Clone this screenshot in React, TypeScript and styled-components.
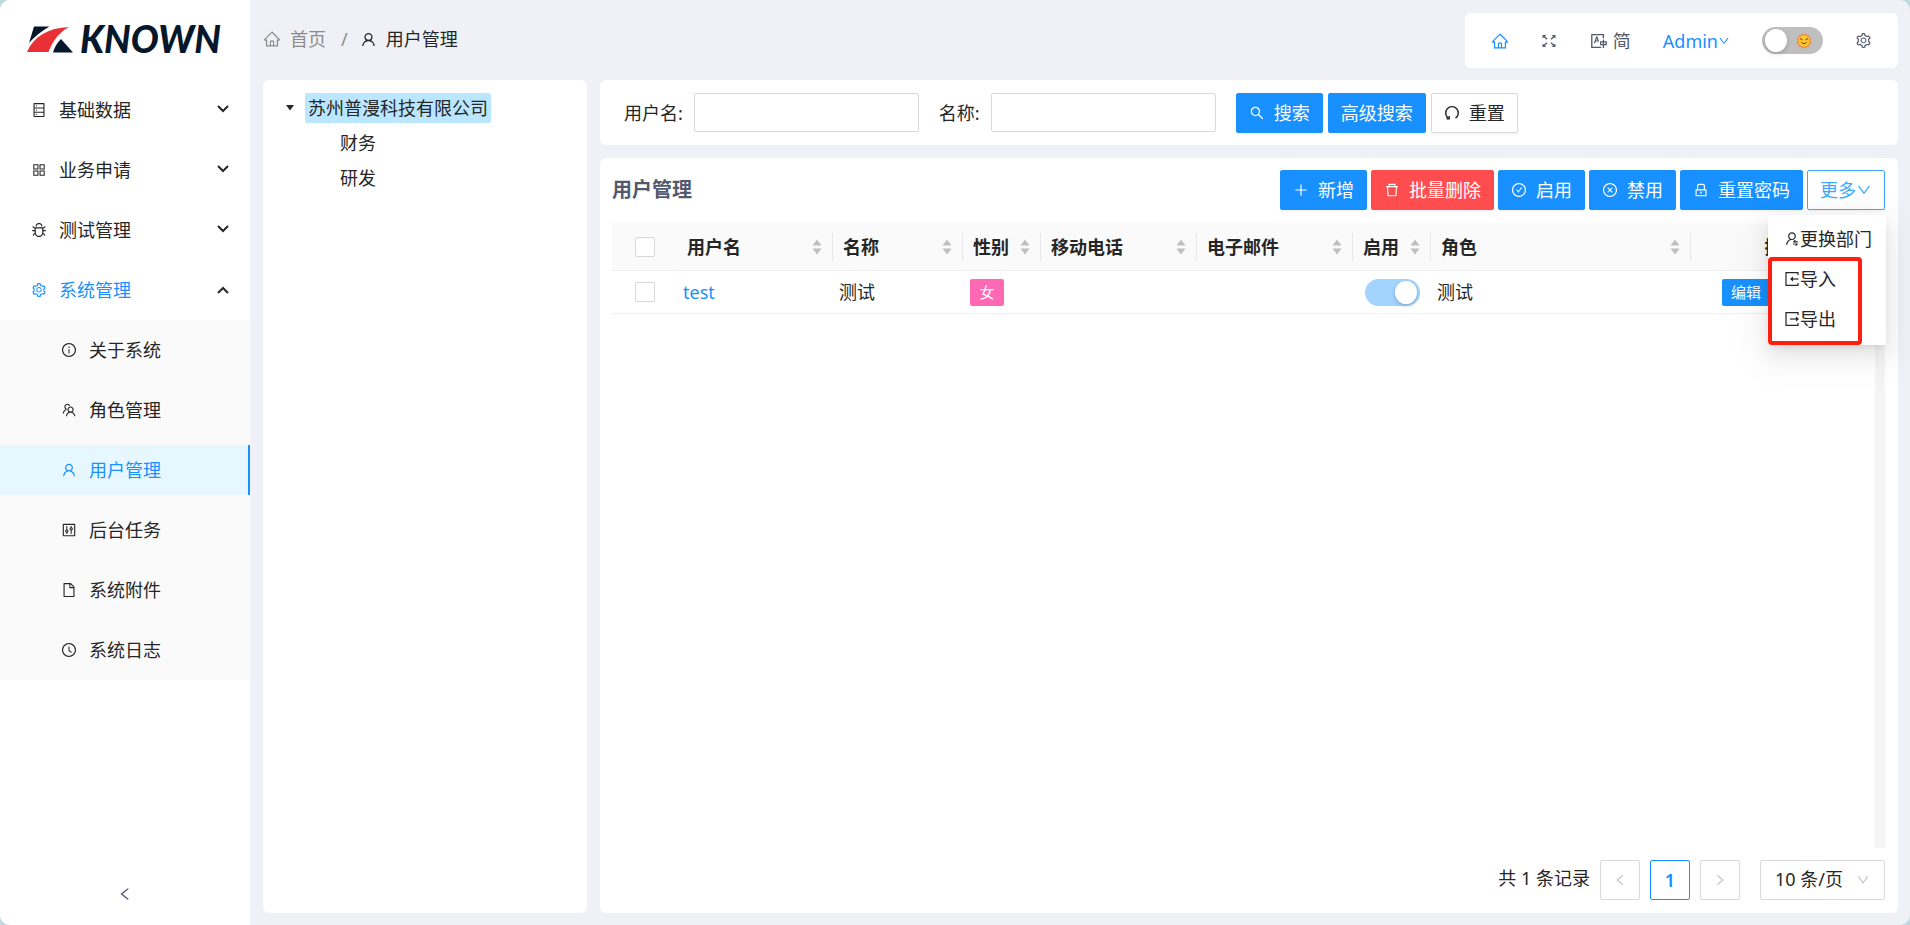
import React from "react";
import styled, { createGlobalStyle, css } from "styled-components";
import {
  AiOutlineHome, AiOutlineUser, AiOutlineDatabase, AiOutlineAppstore, AiOutlineBug, AiOutlineSetting,
  AiOutlineInfoCircle, AiOutlineTeam, AiOutlineControl, AiOutlineFile, AiOutlineClockCircle,
  AiOutlineTranslation, AiOutlineSearch, AiOutlinePlus, AiOutlineDelete, AiOutlineCheckCircle,
  AiOutlineCloseCircle, AiOutlineLock, AiOutlineDown, AiOutlineLeft, AiOutlineRight,
  AiOutlineUserSwitch,
} from "react-icons/ai";

const BLUE = "#1890ff";
const TEXT = "#262626";
const SLATE = "#515a6e";
const LINE = "#d9d9d9";

const Global = createGlobalStyle`
  *, *::before, *::after { box-sizing: border-box; }
  html, body { margin: 0; height: 100%; }
  #root { height: 100%; }
  body {
    background: #bfdadf;
    color: ${TEXT};
    font: 400 18px/28px "Noto Sans", "Noto Sans CJK SC", sans-serif;
  }
  button, input, select { font: inherit; color: inherit; margin: 0; }
  a { color: inherit; text-decoration: none; }
  ul { list-style: none; margin: 0; padding: 0; }
  svg { flex: none; }
`;

const Shell = styled.div`
  display: flex;
  min-height: 100%;
  border-radius: 10px;
  overflow: hidden;
  background: #eff1f6;
`;

/* ---------- sidebar ---------- */

const Sidebar = styled.aside`
  width: 250px;
  flex: none;
  display: flex;
  flex-direction: column;
  background: #fff;
`;

const LogoLink = styled.a`
  display: block;
  height: 80px;
  padding: 14px 0 0 26px;
`;

const Menu = styled.ul`
  flex: 1;
  padding-top: 5px;
`;

const MenuLink = styled.a<{ $sub?: boolean; $active?: boolean; $open?: boolean }>`
  display: flex;
  align-items: center;
  height: 50px;
  margin-bottom: 10px;
  gap: 12px;
  padding: 0 20px 0 ${(p) => (p.$sub ? 61 : 31)}px;
  color: ${(p) => (p.$active || p.$open ? BLUE : TEXT)};
  ${(p) => p.$active && css`
    background: #e6f7ff;
    border-right: 2px solid ${BLUE};
  `}
  svg:last-child:not(:first-child) { margin-left: auto; color: ${TEXT}; }
`;

const SubMenu = styled.ul`
  background: #fafafa;
  padding: 5px 0;
  margin-top: -5px;
  li:last-child a { margin-bottom: 0; }
`;

const Collapse = styled.button`
  height: 60px;
  border: 0;
  background: none;
  color: ${SLATE};
`;

/* ---------- header ---------- */

const Main = styled.div`
  flex: 1;
  min-width: 0;
  display: flex;
  flex-direction: column;
  padding: 13px 12px 12px 13px;
`;

const Header = styled.header`
  display: flex;
  justify-content: space-between;
  align-items: flex-start;
  height: 67px;
`;

const Crumbs = styled.nav`
  display: flex;
  align-items: center;
  gap: 11px;
  height: 52px;
`;

const Crumb = styled.a<{ $muted?: boolean }>`
  display: flex;
  align-items: center;
  gap: 9px;
  color: ${(p) => (p.$muted ? "#8c8c8c" : TEXT)};
`;

const Slash = styled.span`
  color: #8c8c8c;
  padding: 0 1px 0 4px;
`;

const Tools = styled.div`
  display: flex;
  align-items: center;
  height: 55px;
  padding: 0 26px;
  gap: 32px;
  border-radius: 6px;
  background: #fff;
  color: ${SLATE};
`;

const ToolButton = styled.button<{ $blue?: boolean; $gap?: number }>`
  display: flex;
  align-items: center;
  gap: ${(p) => p.$gap ?? 0}px;
  border: 0;
  padding: 0;
  background: none;
  color: ${(p) => (p.$blue ? BLUE : SLATE)};
`;

const Switch = styled.label<{ $width: number; $on?: boolean }>`
  position: relative;
  display: block;
  width: ${(p) => p.$width}px;
  height: 27px;
  border-radius: 14px;
  background: ${(p) => (p.$on ? "#a3d3ff" : "#bfbfbf")};
  input {
    position: absolute;
    inset: 0;
    margin: 0;
    opacity: 0;
  }
  &::after {
    content: "";
    position: absolute;
    top: 2px;
    ${(p) => (p.$on ? "right: 3px;" : "left: 3px;")}
    width: 22px;
    height: 23px;
    border-radius: 50%;
    background: #fff;
    box-shadow: 0 2px 4px rgba(0, 35, 11, 0.2);
  }
  svg { position: absolute; right: 11px; top: 6px; }
`;

const SwitchCell = styled.div`
  display: flex;
  justify-content: center;
`;

/* ---------- content ---------- */

const Content = styled.main`
  flex: 1;
  display: flex;
  gap: 13px;
`;

const Panel = styled.section`
  background: #fff;
  border-radius: 6px;
`;

const TreePanel = styled(Panel)`
  width: 324px;
  flex: none;
  padding: 10px 20px;
`;

const TreeRow = styled.div<{ $child?: boolean }>`
  display: flex;
  align-items: center;
  gap: 10px;
  height: 35px;
  padding-left: ${(p) => (p.$child ? 54 : 2)}px;
`;

const TreeLabel = styled.span<{ $selected?: boolean }>`
  padding: 1px 3px;
  border-radius: 2px;
  background: ${(p) => (p.$selected ? "#bae7ff" : "transparent")};
`;

const Right = styled.div`
  flex: 1;
  min-width: 0;
  display: flex;
  flex-direction: column;
  gap: 13px;
`;

const SearchPanel = styled(Panel)`
  display: flex;
  align-items: center;
  gap: 5px;
  height: 65px;
  padding: 0 24px;
`;

const Field = styled.label`
  display: flex;
  align-items: center;
  gap: 11px;
  margin-right: 15px;
  input {
    width: 225px;
    height: 39px;
    padding: 0 12px;
    border: 1px solid ${LINE};
    border-radius: 2px;
    outline: 0;
  }
`;

const Button = styled.button<{ $tone?: "blue" | "red" | "ghost" | "plain"; $snug?: boolean }>`
  display: flex;
  align-items: center;
  justify-content: center;
  gap: ${(p) => (p.$snug ? 0 : 9)}px;
  height: 40px;
  padding: 0 12px;
  border: 1px solid;
  border-radius: 2px;
  white-space: nowrap;
  box-shadow: 0 2px 0 rgba(0, 0, 0, 0.03);
  ${(p) => ({
    blue: css`background: ${BLUE}; border-color: ${BLUE}; color: #fff;`,
    red: css`background: #ff4d4f; border-color: #ff4d4f; color: #fff;`,
    ghost: css`background: #fff; border-color: #40a9ff; color: #40a9ff;`,
    plain: css`background: #fff; border-color: ${LINE}; color: ${TEXT};`,
  })[p.$tone ?? "blue"]}
`;

const TablePanel = styled(Panel)`
  flex: 1;
  display: flex;
  flex-direction: column;
  padding: 12px 13px 13px 12px;
`;

const Toolbar = styled.div`
  display: flex;
  align-items: center;
  gap: 4px;
  height: 40px;
  margin-bottom: 13px;
`;

const Title = styled.h1`
  margin: 0 auto 0 0;
  font-size: 20px;
  font-weight: 700;
  color: ${SLATE};
`;

const MoreWrap = styled.div`
  position: relative;
`;

const Dropdown = styled.ul`
  position: absolute;
  z-index: 2;
  top: 45px;
  right: -1px;
  width: 118px;
  padding: 4px 0 6px;
  background: #fff;
  border-radius: 2px;
  box-shadow: 0 4px 8px -4px rgba(0, 0, 0, 0.12), 0 8px 20px rgba(0, 0, 0, 0.08), 0 10px 36px 10px rgba(0, 0, 0, 0.05);
  &::after {
    content: "";
    position: absolute;
    left: 0;
    top: 42px;
    width: 94px;
    height: 88px;
    border: 4px solid #ff1f10;
    border-radius: 4px;
    pointer-events: none;
  }
`;

const DropItem = styled.button`
  display: flex;
  align-items: center;
  width: 100%;
  height: 40px;
  padding: 0 16px;
  border: 0;
  background: none;
  white-space: nowrap;
`;

const TableArea = styled.div`
  flex: 1;
  display: flex;
  align-items: stretch;
`;

const Table = styled.table`
  flex: 1;
  align-self: flex-start;
  table-layout: fixed;
  width: 100%;
  border-collapse: separate;
  border-spacing: 0;
`;

const Th = styled.th`
  height: 48px;
  padding: 0;
  background: #fafafa;
  border-bottom: 1px solid #f0f0f0;
  text-align: left;
  font-weight: 700;
`;

const HeadLabel = styled.div<{ $plain?: boolean }>`
  display: flex;
  align-items: center;
  justify-content: ${(p) => (p.$plain ? "center" : "space-between")};
  height: 28px;
  padding: 0 10px;
  white-space: nowrap;
  border-right: 1px solid ${(p) => (p.$plain ? "transparent" : "#e8e8e8")};
`;

const Td = styled.td`
  height: 43px;
  padding: 0 6px;
  border-bottom: 1px solid #f0f0f0;
  white-space: nowrap;
`;

const Check = styled.input`
  appearance: none;
  display: block;
  width: 20px;
  height: 20px;
  border: 1px solid ${LINE};
  border-radius: 2px;
  background: #fff;
`;

const CheckBox = styled.div`
  display: flex;
  justify-content: center;
`;

const Tag = styled.span`
  display: block;
  width: 34px;
  height: 27px;
  margin-left: 1px;
  border-radius: 2px;
  background: #ff69b4;
  color: #fff;
  font-size: 15px;
  line-height: 27px;
  text-align: center;
`;

const NameLink = styled.a`
  color: ${BLUE};
`;

const EditButton = styled.button`
  display: block;
  height: 27px;
  margin-left: 25px;
  padding: 0 9px;
  border: 0;
  border-radius: 2px;
  background: ${BLUE};
  color: #fff;
  font-size: 15px;
  line-height: 27px;
`;

const ScrollColumn = styled.div`
  width: 10px;
  flex: none;
  display: flex;
  flex-direction: column;
  &::before {
    content: "";
    height: 48px;
    background: #fafafa;
    border-bottom: 1px solid #f0f0f0;
  }
  &::after {
    content: "";
    flex: 1;
    background: #f5f5f5;
  }
`;

const Pager = styled.div`
  display: flex;
  align-items: center;
  justify-content: flex-end;
  gap: 10px;
  margin-top: 12px;
`;

const Total = styled.span`
  padding-bottom: 4px;
`;

const PageButton = styled.button<{ $current?: boolean }>`
  display: grid;
  place-items: center;
  width: 40px;
  height: 40px;
  padding: 0;
  border: 1px solid ${(p) => (p.$current ? BLUE : LINE)};
  border-radius: 2px;
  background: #fff;
  color: ${(p) => (p.$current ? BLUE : "#bfbfbf")};
  font-weight: 600;
`;

const SizeSelect = styled.div`
  display: flex;
  align-items: center;
  width: 125px;
  height: 40px;
  margin-left: 10px;
  padding-right: 14px;
  border: 1px solid ${LINE};
  border-radius: 2px;
  color: #bfbfbf;
  select {
    flex: 1;
    height: 38px;
    padding: 0 0 2px 14px;
    appearance: none;
    border: 0;
    background: none;
    color: ${TEXT};
  }
`;

/* ---------- drawings ---------- */

const Logo = () => (
  <svg width="210" height="52" viewBox="0 -10 210 52" role="img" aria-label="KNOWN">
    <path d="M8 2.500H23.500C15 7 8.500 13 3 19Z" fill="#06172b" />
    <path d="M1 28C8 12 22 4 43 3C32 9 27 17 22.500 28Z" fill="#e93035" />
    <path d="M35 15L47 28.500H27C28.500 23 31 19 35 15Z" fill="#06172b" />
    <text x="54" y="29" fontFamily="Lato, sans-serif" fontWeight="900" fontStyle="italic" fontSize="37" fill="#06172b">KNOWN</text>
  </svg>
);

const Chevron = ({ up }: { up?: boolean }) => (
  <svg width="14" height="10" viewBox="0 0 14 10" fill="none" stroke="currentColor" strokeWidth="2">
    <path d={up ? "M2 8L7 3L12 8" : "M2 1L7 6L12 1"} />
  </svg>
);

const Expand = () => (
  <svg width="17" height="14" viewBox="0 0 17 14" stroke="currentColor" fill="currentColor">
    <path fill="none" strokeWidth="1.500" d="M2.500 2L6 5.200M13.500 2L10 5.200M2.500 12L6 8.800M13.500 12L10 8.800" />
    <path stroke="none" d="M1.500 1H5.300L1.500 4.600ZM14.500 1H10.700L14.500 4.600ZM1.500 13H5.300L1.500 9.400ZM14.500 13H10.700L14.500 9.400Z" />
  </svg>
);

const Sun = () => (
  <svg width="16" height="16" viewBox="0 0 16 16">
    {[0, 30, 60].map((a) => (
      <rect key={a} x="2.5" y="2.5" width="11" height="11" fill="#f7893b" transform={`rotate(${a} 8 8)`} />
    ))}
    <circle cx="8" cy="8" r="5.700" fill="#fdc530" />
    <path d="M4 5.500L6.500 6.800M12 5.500L9.500 6.800M5.500 9.500Q8 12 10.500 9.500" stroke="#6b3d12" fill="none" />
  </svg>
);

const ResetIcon = () => (
  <svg width="16" height="16" viewBox="0 0 16 16" fill="none" stroke="currentColor" strokeWidth="1.400">
    <path d="M11.500 13.200A6.300 6.300 0 1 0 4.500 13.200" />
    <path d="M2.500 13.800H5.200V11" />
  </svg>
);

const TransferIcon = ({ out }: { out?: boolean }) => (
  <svg width="16" height="16" viewBox="0 0 16 16" fill="none" stroke="currentColor" strokeWidth="1.200">
    <path d="M14 4V1.600H2V14.400H14V12" />
    {out ? <path d="M6 8H13" /> : <path d="M7 8H14.500" />}
    <path fill="currentColor" stroke="none" d={out ? "M12 5.600L15 8L12 10.400Z" : "M9 5.600L6 8L9 10.400Z"} />
  </svg>
);

const Caret = () => (
  <svg width="10" height="6" viewBox="0 0 10 6"><path d="M1 0H9L5 5.500Z" fill="currentColor" /></svg>
);

const Sorter = () => (
  <svg width="10" height="16" viewBox="0 0 10 16" fill="#bfbfbf">
    <path d="M5 0.500L9.500 6.500H0.500ZM0.500 9.500H9.500L5 15.500Z" />
  </svg>
);

/* ---------- data ---------- */

const groups = [
  { label: "基础数据", icon: AiOutlineDatabase },
  { label: "业务申请", icon: AiOutlineAppstore },
  { label: "测试管理", icon: AiOutlineBug },
];

const systemItems = [
  { label: "关于系统", icon: AiOutlineInfoCircle },
  { label: "角色管理", icon: AiOutlineTeam },
  { label: "用户管理", icon: AiOutlineUser, active: true },
  { label: "后台任务", icon: AiOutlineControl },
  { label: "系统附件", icon: AiOutlineFile },
  { label: "系统日志", icon: AiOutlineClockCircle },
];

const columns = [
  { label: "用户名", width: 156 },
  { label: "名称", width: 130 },
  { label: "性别", width: 78 },
  { label: "移动电话", width: 156 },
  { label: "电子邮件", width: 156 },
  { label: "启用", width: 78 },
  { label: "角色", width: 260 },
];

export default function App() {
  return (
    <>
      <Global />
      <Shell>
        <Sidebar>
          <LogoLink href="#"><Logo /></LogoLink>
          <Menu>
            {groups.map(({ label, icon: Icon }) => (
              <li key={label}>
                <MenuLink href="#"><Icon size={16} />{label}<Chevron /></MenuLink>
              </li>
            ))}
            <li>
              <MenuLink href="#" $open><AiOutlineSetting size={16} />系统管理<Chevron up /></MenuLink>
              <SubMenu>
                {systemItems.map(({ label, icon: Icon, active }) => (
                  <li key={label}>
                    <MenuLink href="#" $sub $active={active}><Icon size={16} /><span>{label}</span></MenuLink>
                  </li>
                ))}
              </SubMenu>
            </li>
          </Menu>
          <Collapse aria-label="收起"><AiOutlineLeft size={16} /></Collapse>
        </Sidebar>

        <Main>
          <Header>
            <Crumbs>
              <Crumb href="#" $muted><AiOutlineHome size={18} />首页</Crumb>
              <Slash>/</Slash>
              <Crumb href="#"><AiOutlineUser size={17} />用户管理</Crumb>
            </Crumbs>
            <Tools>
              <ToolButton $blue aria-label="首页"><AiOutlineHome size={18} /></ToolButton>
              <ToolButton aria-label="全屏"><Expand /></ToolButton>
              <ToolButton $gap={5}><AiOutlineTranslation size={18} />简</ToolButton>
              <ToolButton $blue>Admin<AiOutlineDown size={12} /></ToolButton>
              <Switch $width={61}><input type="checkbox" aria-label="主题" /><Sun /></Switch>
              <ToolButton aria-label="设置"><AiOutlineSetting size={17} /></ToolButton>
            </Tools>
          </Header>

          <Content>
            <TreePanel>
              <TreeRow><Caret /><TreeLabel $selected>苏州普漫科技有限公司</TreeLabel></TreeRow>
              <TreeRow $child><TreeLabel>财务</TreeLabel></TreeRow>
              <TreeRow $child><TreeLabel>研发</TreeLabel></TreeRow>
            </TreePanel>

            <Right>
              <SearchPanel>
                <Field>用户名:<input type="text" /></Field>
                <Field>名称:<input type="text" /></Field>
                <Button><AiOutlineSearch size={16} />搜索</Button>
                <Button>高级搜索</Button>
                <Button $tone="plain"><ResetIcon />重置</Button>
              </SearchPanel>

              <TablePanel>
                <Toolbar>
                  <Title>用户管理</Title>
                  <Button><AiOutlinePlus size={16} />新增</Button>
                  <Button $tone="red"><AiOutlineDelete size={16} />批量删除</Button>
                  <Button><AiOutlineCheckCircle size={16} />启用</Button>
                  <Button><AiOutlineCloseCircle size={16} />禁用</Button>
                  <Button><AiOutlineLock size={16} />重置密码</Button>
                  <MoreWrap>
                    <Button $tone="ghost" $snug>更多<AiOutlineDown size={16} /></Button>
                    <Dropdown>
                      <li><DropItem><AiOutlineUserSwitch size={16} />更换部门</DropItem></li>
                      <li><DropItem><TransferIcon />导入</DropItem></li>
                      <li><DropItem><TransferIcon out />导出</DropItem></li>
                    </Dropdown>
                  </MoreWrap>
                </Toolbar>

                <TableArea>
                  <Table>
                    <colgroup>
                      <col style={{ width: 65 }} />
                      {columns.map((c) => <col key={c.label} style={{ width: c.width }} />)}
                      <col />
                    </colgroup>
                    <thead>
                      <tr>
                        <Th><CheckBox><Check type="checkbox" aria-label="全选" /></CheckBox></Th>
                        {columns.map((c) => (
                          <Th key={c.label}><HeadLabel>{c.label}<Sorter /></HeadLabel></Th>
                        ))}
                        <Th><HeadLabel $plain>操作</HeadLabel></Th>
                      </tr>
                    </thead>
                    <tbody>
                      <tr>
                        <Td><CheckBox><Check type="checkbox" aria-label="选择 test" /></CheckBox></Td>
                        <Td><NameLink href="#">test</NameLink></Td>
                        <Td>测试</Td>
                        <Td><Tag>女</Tag></Td>
                        <Td />
                        <Td />
                        <Td>
                          <SwitchCell>
                            <Switch $width={55} $on><input type="checkbox" defaultChecked aria-label="启用" /></Switch>
                          </SwitchCell>
                        </Td>
                        <Td>测试</Td>
                        <Td><EditButton>编辑</EditButton></Td>
                      </tr>
                    </tbody>
                  </Table>
                  <ScrollColumn />
                </TableArea>

                <Pager>
                  <Total>共 1 条记录</Total>
                  <PageButton aria-label="上一页"><AiOutlineLeft size={14} /></PageButton>
                  <PageButton $current>1</PageButton>
                  <PageButton aria-label="下一页"><AiOutlineRight size={14} /></PageButton>
                  <SizeSelect>
                    <select aria-label="每页条数"><option>10 条/页</option></select>
                    <AiOutlineDown size={14} />
                  </SizeSelect>
                </Pager>
              </TablePanel>
            </Right>
          </Content>
        </Main>
      </Shell>
    </>
  );
}
